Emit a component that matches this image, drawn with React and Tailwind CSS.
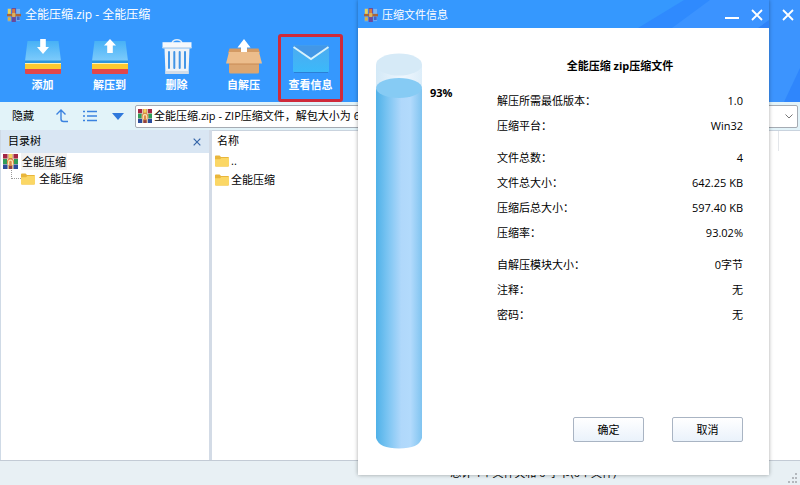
import React from "react";

function BooksIcon({ className }) {
  return (
    <svg viewBox="0 0 15 15" className={className} aria-hidden="true">
      <rect x="0.5" y="0.5" width="4" height="14" fill="#6aa9e8" />
      <rect x="1" y="1" width="3" height="6" fill="#e6d35a" />
      <rect x="5" y="0" width="4.5" height="15" fill="#6b4a9c" />
      <rect x="5.6" y="1" width="3" height="5" fill="#d8773c" />
      <rect x="10" y="1" width="4" height="13" fill="#7db4f2" />
      <rect x="10.6" y="9" width="3" height="4" fill="#3f66c9" />
      <rect x="0" y="6.3" width="15" height="2.6" fill="#a8653b" />
      <rect x="5.5" y="5.3" width="3.5" height="4.4" fill="#d9b35c" />
      <rect x="1" y="10" width="3" height="3.5" fill="#e0b23e" />
    </svg>
  );
}

function ArchiveIcon({ className }) {
  return (
    <svg viewBox="0 0 15 15" className={className} aria-hidden="true">
      <rect width="15" height="15" fill="#ece4d3" />
      <rect width="4.5" height="4.5" fill="#a32845" />
      <rect x="10.5" width="4.5" height="4.5" fill="#a32845" />
      <rect y="5" width="4" height="5" fill="#2f9c58" />
      <rect x="11" y="5" width="4" height="5" fill="#2f9c58" />
      <rect y="10.5" width="4.5" height="4.5" fill="#2b4c9c" />
      <rect x="10.5" y="10.5" width="4.5" height="4.5" fill="#2b4c9c" />
      <rect x="5.5" y="0" width="4" height="15" fill="#c97f3c" />
      <rect x="6" y="0" width="3" height="4" fill="#f1d25c" />
      <circle cx="7.5" cy="8" r="3.6" fill="#dc8a4a" />
      <path d="M5.6 11V8a1.9 1.9 0 0 1 3.8 0v3" fill="none" stroke="#fbe7b5" strokeWidth="1.3" />
      <rect x="6" y="12" width="3" height="3" fill="#8e3f48" />
    </svg>
  );
}

function FolderIcon({ className }) {
  return (
    <svg viewBox="0 0 14 12" className={className} aria-hidden="true">
      <path d="M0 1.4Q0 .5 .9.5H4.6L6 2H13Q14 2 14 3V10.5Q14 11.5 13 11.5H1Q0 11.5 0 10.5Z" fill="#e9b63c" />
      <path d="M0 4.2H5L6.3 3H14V10.5Q14 11.5 13 11.5H1Q0 11.5 0 10.5Z" fill="#fbd765" />
    </svg>
  );
}

function StackIcon({ up }) {
  const id = up ? "stack-up" : "stack-down";
  return (
    <svg viewBox="0 0 36 36" className="size-9" aria-hidden="true">
      <defs>
        <linearGradient id={id} x1="0" y1="0" x2="0" y2="1">
          <stop offset="0" stopColor="#47b1f6" />
          <stop offset="1" stopColor="#7dcbfb" />
        </linearGradient>
      </defs>
      <path d="M2.5 2H33.5L36 22H0Z" fill={`url(#${id})`} />
      <path d="M0 21.5H36V25H0Z" fill="#2d94dc" />
      <path d="M0 24H36V30H0Z" fill="#fcc92f" />
      <path d="M0 24H36V25H0Z" fill="#fff2b8" />
      <path d="M0 30H36V34Q36 35 35 35H1Q0 35 0 34Z" fill="#e0474c" />
      {up ? (
        <path d="M18 0L24 6.500H20.800V14H15.200V6.500H12Z" fill="#fff" />
      ) : (
        <path d="M15.200 0H20.800V8H24L18 15L12 8H15.200Z" fill="#fff" />
      )}
    </svg>
  );
}

function TrashIcon() {
  return (
    <svg viewBox="0 0 36 36" className="size-9" aria-hidden="true">
      <path d="M13 4Q14 .8 18 .8T23 4" fill="none" stroke="#dcebf8" strokeWidth="1.4" />
      <path d="M3.5 3.2H32.5V9H3.5Z" fill="#f5f8fc" />
      <path d="M3.5 8H32.5V9.500H3.500Z" fill="#c9dcef" />
      <path d="M5.500 9.500H30.500L29.500 35H6.500Z" fill="#eef3f8" />
      <path d="M10 13V29M15.300 13V29M20.700 13V29M26 13V29" stroke="#4295e6" strokeWidth="2" strokeLinecap="round" />
      <path d="M6.400 32H29.600L29.500 35H6.500Z" fill="#d3dde8" />
    </svg>
  );
}

function BoxIcon() {
  return (
    <svg viewBox="0 0 36 36" className="size-9" aria-hidden="true">
      <path d="M3 22H33V33Q33 34.500 31.500 34.500H4.500Q3 34.500 3 33Z" fill="#dba672" />
      <path d="M3 24H33V25.500H3Z" fill="#c88b55" />
      <path d="M3.500 9.500H32.500L34 14H2Z" fill="#d39a63" />
      <path d="M3 13H33L36 24.500H0Z" fill="#ecbd8c" />
      <path d="M18 0L24.500 8.500H21V13H15V8.500H11.500Z" fill="#fff" />
    </svg>
  );
}

function MailIcon() {
  return (
    <svg viewBox="0 0 36 36" className="size-9" aria-hidden="true">
      <defs>
        <linearGradient id="mail" x1="0" y1="0" x2="0" y2="1">
          <stop offset="0" stopColor="#4dabef" />
          <stop offset="1" stopColor="#3bb9fa" />
        </linearGradient>
      </defs>
      <path d="M1 33H35V34H1Z" fill="#2b7fd6" />
      <rect y="6.5" width="36" height="26.500" rx="1" fill="url(#mail)" />
      <path d="M0 8L18 20.500L36 8V6.500H0Z" fill="#4397e6" />
      <path d="M.5 8L18 20L35.500 8" fill="none" stroke="#d7f2fd" strokeWidth="2" />
    </svg>
  );
}

function CloseGlyph({ className }) {
  return (
    <svg viewBox="0 0 12 12" className={className} aria-hidden="true">
      <path d="M1 1L11 11M11 1L1 11" stroke="currentColor" strokeWidth="1.800" fill="none" />
    </svg>
  );
}

function Tank() {
  return (
    <svg viewBox="0 0 46 396" className="h-[396px] w-[46px] shrink-0" role="img" aria-label="93%">
      <defs>
        <linearGradient id="liquid">
          <stop offset="0" stopColor="#4fb1e8" />
          <stop offset="0.220" stopColor="#75c2f1" />
          <stop offset="0.550" stopColor="#b0d8fb" />
          <stop offset="0.750" stopColor="#b2dafc" />
          <stop offset="1" stopColor="#80c4f0" />
        </linearGradient>
        <linearGradient id="glass">
          <stop offset="0" stopColor="#d3e9f7" />
          <stop offset="0.600" stopColor="#eef6fd" />
          <stop offset="1" stopColor="#dcedf9" />
        </linearGradient>
      </defs>
      <path d="M0 12V36H46V12Z" fill="url(#glass)" />
      <ellipse cx="23" cy="11.500" rx="23" ry="11" fill="#d6eaf7" />
      <path d="M0 36V385Q3 395.500 23 395.500T46 385V36Z" fill="url(#liquid)" />
      <ellipse cx="23" cy="35" rx="23" ry="10" fill="#86cbf4" />
    </svg>
  );
}

const tools = [
  { label: "添加", icon: <StackIcon /> },
  { label: "解压到", icon: <StackIcon up /> },
  { label: "删除", icon: <TrashIcon /> },
  { label: "自解压", icon: <BoxIcon /> },
  { label: "查看信息", icon: <MailIcon />, marked: true },
];

const groups = [
  [
    ["解压所需最低版本：", "1.0"],
    ["压缩平台：", "Win32"],
  ],
  [
    ["文件总数：", "4"],
    ["文件总大小：", "642.25 KB"],
    ["压缩后总大小：", "597.40 KB"],
    ["压缩率：", "93.02%"],
  ],
  [
    ["自解压模块大小：", "0字节"],
    ["注释：", "无"],
    ["密码：", "无"],
  ],
];

function Header() {
  return (
    <header className="relative h-[102px] bg-[#3598fe] text-white">
      <svg className="absolute right-0 top-0 h-full w-[200px]" viewBox="0 0 200 102" aria-hidden="true">
        <path d="M160 0H200V102H160Z" fill="#3c94fe" />
        <path d="M200 68V102H184Z" fill="#2f86fc" />
      </svg>
      <div className="relative flex h-[30px] items-center justify-between pl-[7px] pr-[5px]">
        <h1 className="flex items-center gap-1 text-xs">
          <BooksIcon className="size-[14px]" />
          全能压缩.zip - 全能压缩
        </h1>
        <button type="button" aria-label="关闭" className="p-px">
          <CloseGlyph className="size-3" />
        </button>
      </div>
      <nav className="relative flex gap-[2px] pl-[10px] pt-1">
        {tools.map((t) => (
          <button
            key={t.label}
            type="button"
            className={`flex h-[68px] w-[65px] flex-col items-center rounded-[3px] border-[3px] pt-[2px] text-[11px] font-bold leading-4 ${
              t.marked ? "border-[#cf2a3a]" : "border-transparent"
            }`}
          >
            {t.icon}
            <span className="mt-[2px] whitespace-nowrap">{t.label}</span>
          </button>
        ))}
      </nav>
    </header>
  );
}

function AddressBar() {
  return (
    <div className="flex h-7 items-center bg-[#e2f3f9] pl-3 pr-[2px] text-[#3b82e0]">
      <button type="button" className="w-[35px] text-left text-[11px] text-black">隐藏</button>
      <button type="button" aria-label="上一级" className="ml-2">
        <svg viewBox="0 0 14 14" className="size-[14px]" fill="none" stroke="currentColor" strokeWidth="1.400">
          <path d="M1.500 5.500L6 1L10.500 5.500M6 1V10Q6 12.500 8.500 12.500H13" />
        </svg>
      </button>
      <button type="button" aria-label="列表" className="ml-[14px]">
        <svg viewBox="0 0 14 12" className="h-3 w-[14px]" fill="none" stroke="currentColor" strokeWidth="1.400">
          <path d="M0 1.500H2M4 1.500H14M0 6H2M4 6H14M0 10.500H2M4 10.500H14" />
        </svg>
      </button>
      <button type="button" aria-label="更多" className="ml-[15px]">
        <svg viewBox="0 0 12 7" className="h-[7px] w-3" fill="#2f78dc">
          <path d="M0 0H12L6 7Z" />
        </svg>
      </button>
      <div className="relative ml-[11px] flex h-[23px] flex-1 items-center rounded-[2px] border border-[#a5abb3] bg-white pl-[2px]">
        <ArchiveIcon className="size-[14px] shrink-0" />
        <select aria-label="地址" className="h-full flex-1 appearance-none bg-transparent pl-[2px] text-[11px] text-black outline-none">
          <option>全能压缩.zip - ZIP压缩文件，解包大小为 657,664 字节</option>
        </select>
        <svg viewBox="0 0 8 5" className="pointer-events-none absolute right-1 h-[5px] w-2" fill="none" stroke="#777">
          <path d="M.5.5L4 4L7.500.5" />
        </svg>
      </div>
    </div>
  );
}

function Dialog() {
  return (
    <section
      role="dialog"
      aria-label="压缩文件信息"
      className="absolute left-[358px] top-0 flex h-[475px] w-[411px] flex-col bg-white shadow-[0_0_4px_rgba(0,0,0,0.35)]"
    >
      <div className="relative flex h-7 shrink-0 items-center justify-between bg-[#3598fe] px-[6px] pt-[2px] text-white">
        <svg className="absolute right-0 top-0 h-full w-[131px]" viewBox="0 0 131 28" aria-hidden="true">
          <path d="M46 0H131V28H0Z" fill="#2f8afe" />
          <path d="M72 0H131V28H34Z" fill="#3b93ff" />
          <path d="M131 20V28H120Z" fill="#2f82f8" />
        </svg>
        <h2 className="relative flex items-center gap-1 text-[11px]">
          <BooksIcon className="size-[14px]" />
          压缩文件信息
        </h2>
        <div className="relative flex items-center gap-3">
          <button type="button" aria-label="最小化" className="flex h-3 w-[14px] items-end pb-[2px]">
            <span className="h-[2px] w-full bg-white" />
          </button>
          <button type="button" aria-label="关闭">
            <CloseGlyph className="size-3" />
          </button>
        </div>
      </div>
      <div className="flex flex-1 pl-[18px] pr-[26px] pt-[25px]">
        <Tank />
        <span className="ml-2 mt-8 w-[67px] text-[11px] font-bold leading-4">93%</span>
        <div className="flex flex-1 flex-col pb-[33px] text-[11px] leading-[25px]">
          <h3 className="text-center font-bold">全能压缩 zip压缩文件</h3>
          <div className="mt-[10px] flex flex-col gap-[7px]">
            {groups.map((g) => (
              <dl key={g[0][0]}>
                {g.map(([k, v]) => (
                  <div key={k} className="flex justify-between">
                    <dt>{k}</dt>
                    <dd>{v}</dd>
                  </div>
                ))}
              </dl>
            ))}
          </div>
          <div className="mt-auto flex justify-end gap-7">
            {["确定", "取消"].map((label) => (
              <button
                key={label}
                type="button"
                className="h-[25px] w-[71px] rounded-[2px] border border-[#a9b4c3] bg-linear-to-b from-white to-[#eaf2fb] text-[11px] leading-4"
              >
                {label}
              </button>
            ))}
          </div>
        </div>
      </div>
    </section>
  );
}

export default function App() {
  return (
    <div className="relative flex min-h-screen flex-col overflow-hidden bg-white font-['Open_Sans','Noto_Sans_CJK_SC',sans-serif] text-[11px] text-black">
      <Header />
      <AddressBar />
      <main className="flex flex-1 border-b border-[#c3cbd5]">
        <aside className="w-[209px] border-l border-[#cfdae6]">
          <div className="flex h-[23px] items-center justify-between bg-[#d9e6f3] pl-[7px] pr-2">
            <h2>目录树</h2>
            <button type="button" aria-label="关闭目录树" className="text-[#3565a8]">
              <CloseGlyph className="size-2" />
            </button>
          </div>
          <ul className="pl-[2px] leading-[17px]">
            <li>
              <div className="flex items-center gap-[3px]">
                <ArchiveIcon className="size-[15px]" />
                <span className="bg-[#f1f1f1] px-px">全能压缩</span>
              </div>
              <ul className="pl-2">
                <li className="flex items-center">
                  <span className="mb-2 h-[9px] w-[10px] border-b border-l border-dotted border-[#999]" />
                  <FolderIcon className="h-3 w-[14px]" />
                  <span className="pl-1">全能压缩</span>
                </li>
              </ul>
            </li>
          </ul>
        </aside>
        <div className="w-[3px] bg-[#d3dbe6]" />
        <section className="flex-1 border-t border-[#c9d3de]">
          <table className="w-full text-left">
            <thead>
              <tr className="h-5">
                <th className="py-0 pl-[5px] font-normal leading-4">名称</th>
                <th className="w-[22px] border-l border-[#e3e6ea] p-0" />
              </tr>
            </thead>
            <tbody>
              {["..", "全能压缩"].map((name) => (
                <tr key={name}>
                  <td className="p-0 pl-[3px] leading-[19px]">
                    <span className="flex items-center gap-[2px]">
                      <FolderIcon className="h-3 w-[14px]" />
                      {name}
                    </span>
                  </td>
                  <td />
                </tr>
              ))}
            </tbody>
          </table>
        </section>
      </main>
      <footer className="relative grid h-6 grid-cols-3 items-center bg-[#e8f0f4]">
        <span />
        <span className="col-span-2 text-center">总计 1个文件夹和 0 字节(0个文件)</span>
        <svg viewBox="0 0 10 10" className="absolute bottom-[2px] right-[2px] size-[10px]" fill="#b3b8bd" aria-hidden="true">
          <path d="M7 0H9V2H7ZM7 4H9V6H7ZM7 8H9V10H7ZM4 4H6V6H4ZM4 8H6V10H4ZM0 8H2V10H0Z" />
        </svg>
      </footer>
      <Dialog />
    </div>
  );
}
